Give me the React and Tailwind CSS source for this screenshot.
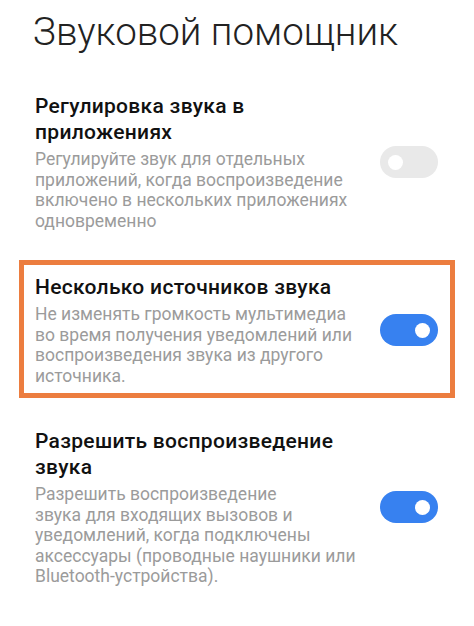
import React from 'react';

const sections = [
  {
    title: ['Регулировка звука в', 'приложениях'],
    desc: [
      'Регулируйте звук для отдельных',
      'приложений, когда воспроизведение',
      'включено в нескольких приложениях',
      'одновременно',
    ],
    on: false,
  },
  {
    title: ['Несколько источников звука'],
    desc: [
      'Не изменять громкость мультимедиа',
      'во время получения уведомлений или',
      'воспроизведения звука из другого',
      'источника.',
    ],
    on: true,
  },
  {
    title: ['Разрешить воспроизведение', 'звука'],
    desc: [
      'Разрешить воспроизведение',
      'звука для входящих вызовов и',
      'уведомлений, когда подключены',
      'аксессуары (проводные наушники или',
      'Bluetooth-устройства).',
    ],
    on: true,
  },
];

function Toggle({ on }) {
  return (
    <div
      className={
        'flex h-[32px] w-[58px] shrink-0 items-center rounded-full px-[8px] ' +
        (on ? 'justify-end bg-[#3781f0]' : 'justify-start bg-[#e9e9e9]')
      }
    >
      <div className="h-[15px] w-[15px] rounded-full bg-white" />
    </div>
  );
}

function Row({ item }) {
  return (
    <div className="flex items-center justify-between">
      <div className="whitespace-nowrap">
        <div className="text-[21px] font-medium leading-[26px] tracking-[0.3px] text-[#111]">
          {item.title.map((t) => (
            <div key={t}>{t}</div>
          ))}
        </div>
        <div className="mt-1 text-[17.5px] leading-[20.5px] text-[#9b9b9b]">
          {item.desc.map((t) => (
            <div key={t}>{t}</div>
          ))}
        </div>
      </div>
      <Toggle on={item.on} />
    </div>
  );
}

export default function App() {
  return (
    <div
      className="h-[626px] w-[474px] overflow-hidden bg-white"
      style={{ fontFamily: 'Roboto, "Noto Sans", sans-serif' }}
    >
      <h1 className="pl-[33px] pt-2 text-[38.5px] font-light leading-[48px] text-[#222]">
        Звуковой помощник
      </h1>

      <div className="mt-[37px] pl-[35px] pr-[36px]">
        <Row item={sections[0]} />
      </div>

      <div className="mx-[19px] mt-[29px] border-[5px] border-[#ec7d3f] pb-[7px] pl-[11px] pr-[12px] pt-[9px]">
        <Row item={sections[1]} />
      </div>

      <div className="mt-[30px] pl-[35px] pr-[36px]">
        <Row item={sections[2]} />
      </div>
    </div>
  );
}
